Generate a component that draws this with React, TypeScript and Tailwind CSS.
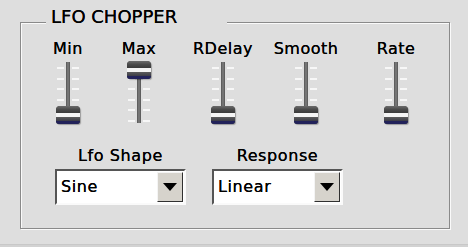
import React from 'react';

const font = { fontFamily: '"DejaVu Sans", Verdana, sans-serif' };

interface FaderProps {
  label: string;
  knobTop: number;
  ml: string;
}

const Ticks = () => (
  <div className="flex flex-col w-[7px] pt-[6px] gap-[8.5px]">
    {[0, 1, 2, 3, 4, 5].map((i) => (
      <div key={i} className="h-[2px] bg-[#f7f7f7]" />
    ))}
  </div>
);

const Fader: React.FC<FaderProps> = ({ label, knobTop, ml }) => {
  return (
    <div className={`w-[60px] flex flex-col items-center ${ml}`}>
      <div className="text-[16px] leading-[20px] tracking-[0.5px] text-black whitespace-nowrap [text-shadow:0_0_0.6px_#000]">
        {label}
      </div>
      <div className="relative mt-[2px] h-[63px] w-full flex justify-center gap-[2px]">
        <Ticks />
        <div className="w-[4px] mt-[1px] h-[61px] bg-[#747474] border-x border-[#5e5e5e]" />
        <Ticks />
        {/* knob */}
        <div
          className="absolute left-1/2 -translate-x-1/2 w-[24px] h-[18px] rounded-t-[4px] rounded-b-[3px] overflow-hidden flex flex-col bg-[#444] shadow-[1px_1px_1px_rgba(0,0,0,0.3)]"
          style={{ top: knobTop }}
        >
          <div className="h-[7px] bg-gradient-to-b from-[#6c6c6c] via-[#4a4a4a] to-[#3a3a3a]" />
          <div className="h-[4px] bg-[#f4f4f4]" />
          <div className="h-[4px] bg-gradient-to-b from-[#5c5c5c] to-[#3c3c46]" />
          <div className="h-[3px] bg-[#22225a]" />
        </div>
      </div>
    </div>
  );
};

interface DropProps {
  label: string;
  value: string;
  ml: string;
}

const Drop: React.FC<DropProps> = ({ label, value, ml }) => (
  <div className={`w-[131px] flex flex-col items-center ${ml}`}>
    <div className="text-[16px] leading-[20px] tracking-[0.6px] text-black whitespace-nowrap [text-shadow:0_0_0.6px_#000]">
      {label}
    </div>
    <div className="mt-[3px] w-[131px] h-[36px] bg-white border-2 border-t-[#555] border-l-[#555] border-b-[#fafafa] border-r-[#fafafa] flex items-center">
      <div className="flex-1 pl-[4px] text-[16px] leading-[20px] tracking-[0.6px] text-black [text-shadow:0_0_0.6px_#000]">
        {value}
      </div>
      <div className="w-[26px] h-[30px] mr-[1px] bg-[#d6d3cc] border border-t-[#f4f4f4] border-l-[#f4f4f4] border-b-[#303030] border-r-[#303030] flex items-center justify-center">
        <svg width="14" height="8" viewBox="0 0 14 8">
          <polygon points="0,0 14,0 7,8" fill="#000" />
        </svg>
      </div>
    </div>
  </div>
);

export default function App() {
  return (
    <div className="w-[468px] h-[247px] bg-[#dedede] overflow-hidden flex flex-col" style={font}>
      <div className="relative ml-[20px] mt-[22px] w-[430px] h-[207px] border border-[#8a8a8a] shadow-[inset_1px_1px_0_#fafafa,1px_1px_0_#fafafa]">
        <div className="absolute -top-[17px] left-[25px] w-[181px] pl-[5px] bg-[#dedede] text-[18px] leading-[22px] text-black [text-shadow:0_0_0.6px_#000]">
          LFO CHOPPER
        </div>
        <div className="flex mt-[16px]">
          <Fader label="Min" knobTop={45} ml="ml-[17px]" />
          <Fader label="Max" knobTop={0} ml="ml-[11px]" />
          <Fader label="RDelay" knobTop={45} ml="ml-[24px]" />
          <Fader label="Smooth" knobTop={45} ml="ml-[23px]" />
          <Fader label="Rate" knobTop={45} ml="ml-[30px]" />
        </div>
        <div className="flex mt-[22px]">
          <Drop label="Lfo Shape" value="Sine" ml="ml-[34px]" />
          <Drop label="Response" value="Linear" ml="ml-[26px]" />
        </div>
      </div>
      <div className="mt-auto h-[3px] bg-[#d2d2d2] border-t border-[#c8c8c8]" />
    </div>
  );
}
